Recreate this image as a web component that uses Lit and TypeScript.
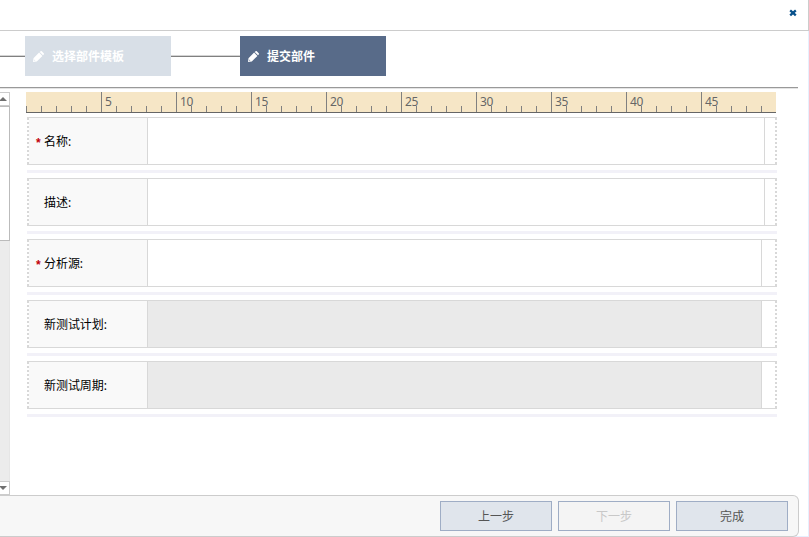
import { LitElement, html, css, svg } from "lit";
import { customElement } from "lit/decorators.js";
import { classMap } from "lit/directives/class-map.js";

interface Field {
  label: string;
  required?: boolean;
  disabled?: boolean;
  narrow?: boolean;
}

const FIELDS: Field[] = [
  { label: "名称:", required: true },
  { label: "描述:" },
  { label: "分析源:", required: true, narrow: true },
  { label: "新测试计划:", disabled: true, narrow: true },
  { label: "新测试周期:", disabled: true, narrow: true },
];

const BUTTONS = [
  { text: "上一步", disabled: false },
  { text: "下一步", disabled: true },
  { text: "完成", disabled: false },
];

const pencil = html`<svg class="pencil" viewBox="0 0 11 11" width="11" height="11">
  ${svg`<path fill="currentColor" fill-rule="evenodd" d="M0 11 L.5 7.2 L6.1 1.6 L9.4 4.9 L3.8 10.5 Z M1.4 8.6 L1.2 9.8 L2.4 9.6 Z M6.7 1 L7.6 .2 Q8.2 -.2 8.8 .3 L10.7 2.2 Q11.2 2.8 10.8 3.4 L10 4.3 Z"/>`}
</svg>`;

@customElement("app-root")
export class AppRoot extends LitElement {
  static styles = css`
    :host {
      display: block;
      width: 809px;
      height: 537px;
      overflow: hidden;
      background: #fff;
      font: 12px "Noto Sans", "Noto Sans CJK SC", sans-serif;
      color: #000;
    }
    * { box-sizing: border-box; }
    .window { display: flex; flex-direction: column; height: 537px; }
    .header {
      height: 31px;
      flex: none;
      display: flex;
      justify-content: flex-end;
      padding: 9px 11px 0 0;
      border-bottom: 1px solid #ccc;
      border-right: 1px solid #ccc;
    }
    .main {
      height: 506px;
      padding-right: 9px;
      border-right: 1px solid #e6effd;
      border-bottom: 1px solid #e6effd;
    }
    .steps { display: flex; height: 56px; padding-top: 5px; }
    .link {
      height: 2px;
      margin-top: 19px;
      background: linear-gradient(#d4d4d4 50%, #808080 50%);
    }
    .link.first { width: 25px; }
    .link.mid { width: 69px; }
    .step {
      width: 146px;
      height: 40px;
      display: flex;
      align-items: center;
      padding-left: 8px;
      gap: 8px;
      color: #fff;
      font-weight: bold;
      background: #d8dfe7;
    }
    .step.active { background: #586b89; }
    .step span { line-height: 18px; padding-top: 2px; }
    .pencil { flex: none; }
    .rule { width: 798px; height: 2px; background: linear-gradient(#999 50%, #e4e4e4 50%); }
    .content { display: flex; height: 406px; padding-top: 3px; }
    .scroll {
      width: 10px;
      height: 403px;
      display: flex;
      flex-direction: column;
      background: #ececec;
    }
    .arrow {
      height: 14px;
      flex: none;
      background: #fff;
      border: solid #ccc;
      border-width: 1px 1px 1px 0;
    }
    .arrow svg { display: block; }
    .thumb { height: 135px; background: #fff; border: solid #bbb; border-width: 1px 1px 1px 0; }
    .space { flex: 1; border-right: 1px solid #e6e6e6; }
    .form { width: 751px; margin-left: 16px; }
    .ruler {
      width: 750px;
      height: 21px;
      display: flex;
      background: #f6e6c6;
      border-bottom: 1px solid #666;
    }
    .unit {
      width: 75px;
      padding-left: 3px;
      line-height: 19px;
      letter-spacing: -0.3px;
      color: #666;
      border-left: 1px solid #808080;
      background: repeating-linear-gradient(90deg, transparent 0 14px, #808080 14px 15px) 0 14px / 74px 6px no-repeat;
    }
    .unit.origin {
      border-left: 0;
      background: repeating-linear-gradient(90deg, #808080 0 1px, transparent 1px 15px) 0 14px / 75px 6px no-repeat;
    }
    .rows { margin: 4px 0 0 1px; }
    .row {
      height: 48px;
      display: flex;
      padding: 0 2px;
      border: solid #d8d8d8;
      border-width: 1px 0;
      background:
        repeating-linear-gradient(#d8d8d8 0 2px, #fff 2px 4px) 0 0 / 2px 46px no-repeat,
        repeating-linear-gradient(#d8d8d8 0 2px, #fff 2px 4px) 100% 0 / 2px 46px no-repeat;
    }
    .label {
      width: 119px;
      display: flex;
      align-items: center;
      padding-left: 7px;
      background: #f9f9f9;
      border-right: 1px solid #d8d8d8;
    }
    .label span { letter-spacing: -0.05px; }
    .star { width: 8px; color: #c1000d; font-family: "Liberation Sans", sans-serif; font-weight: bold; padding-top: 3px; }
    .input { width: 617px; border-right: 1px solid #d8d8d8; }
    .input.narrow { width: 614px; }
    .input.disabled { background: #eaeaea; }
    .strip { height: 3px; margin: 5px 0; background: #f2f1f8; }
    .footer {
      width: 799px;
      height: 42px;
      display: flex;
      gap: 6px;
      justify-content: flex-end;
      padding: 5px 10px 0 0;
      background: #f7f7f7;
      border: solid #ccc;
      border-width: 1px 1px 1px 0;
      border-radius: 0 6px 6px 0;
    }
    .button {
      width: 112px;
      height: 30px;
      border: 1px solid #9fadc5;
      background: #e0e5ec;
      color: #555;
      text-align: center;
      line-height: 30px;
    }
    .button.off { background: #f4f4f4; color: #c8c8c8; }
  `;

  render() {
    return html`<div class="window">
      <div class="header">
        <svg width="8" height="8" viewBox="0 0 8 8"><path d="M1.2 1.3 6.8 6.3M6.8 1.3 1.2 6.3" stroke="#07508b" stroke-width="2.3" fill="none"/></svg>
      </div>
      <div class="main">
        <div class="steps">
          <div class="link first"></div>
          <div class="step">${pencil}<span>选择部件模板</span></div>
          <div class="link mid"></div>
          <div class="step active">${pencil}<span>提交部件</span></div>
        </div>
        <div class="rule"></div>
        <div class="content">
          <div class="scroll">
            <div class="arrow"><svg width="9" height="12"><path d="M-1 8 3 4 7 8Z" fill="#707070"/></svg></div>
            <div class="thumb"></div>
            <div class="space"></div>
            <div class="arrow"><svg width="9" height="12"><path d="M-1 4 3 8 7 4Z" fill="#707070"/></svg></div>
          </div>
          <div class="form">
            <div class="ruler">
              ${Array.from({ length: 10 }, (_, i) => html`<div class=${classMap({ unit: true, origin: i === 0 })}>${i ? i * 5 : ""}</div>`)}
            </div>
            <div class="rows">
              ${FIELDS.map((f) => html`<div class="row">
                  <div class="label"><span class="star">${f.required ? "*" : ""}</span><span>${f.label}</span></div>
                  <div class=${classMap({ input: true, narrow: !!f.narrow, disabled: !!f.disabled })}></div>
                </div>
                <div class="strip"></div>`)}
            </div>
          </div>
        </div>
        <div class="footer">
          ${BUTTONS.map((b) => html`<div class=${classMap({ button: true, off: b.disabled })}>${b.text}</div>`)}
        </div>
      </div>
    </div>`;
  }
}
